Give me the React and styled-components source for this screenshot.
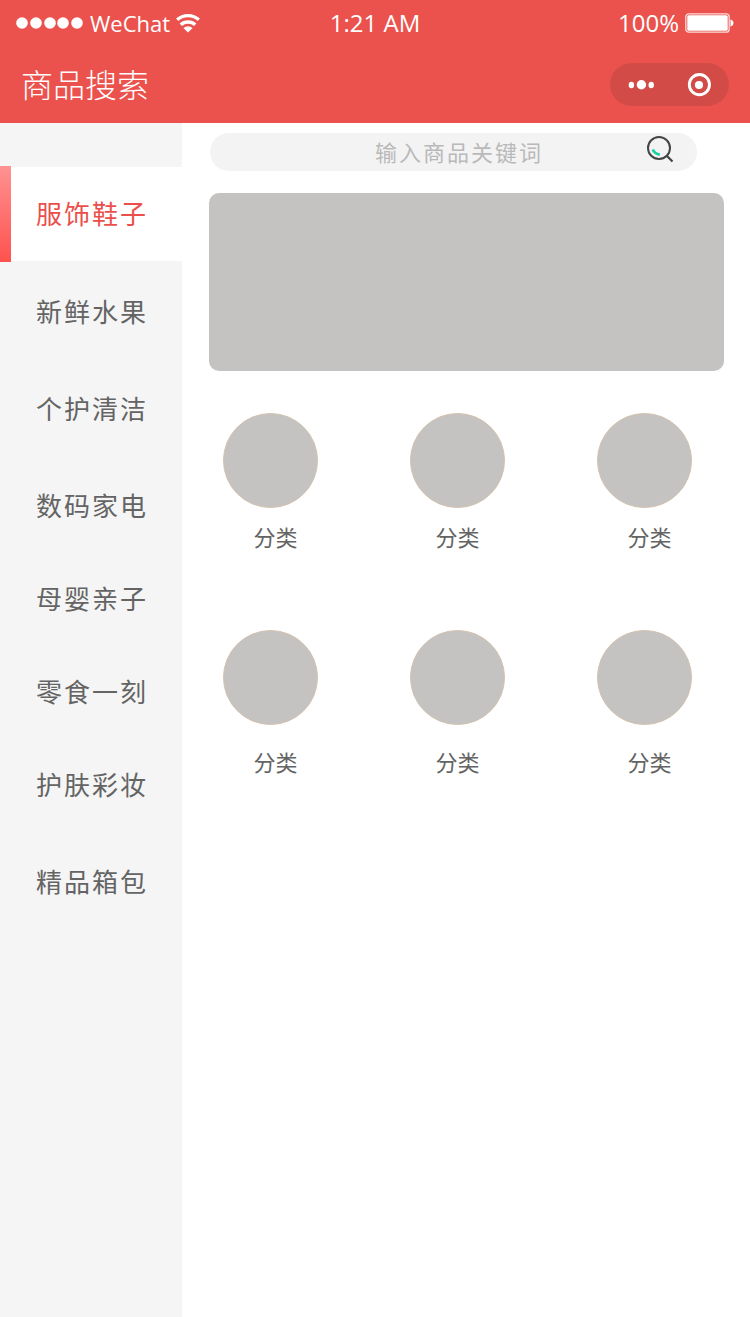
import React, { useState } from "react";
import styled, { createGlobalStyle } from "styled-components";

const GlobalStyle = createGlobalStyle`
  *, *::before, *::after { box-sizing: border-box; }
  body {
    margin: 0;
    background: #fff;
    color: #646464;
    font-family: "Noto Sans CJK SC", sans-serif;
  }
  button, input { font: inherit; color: inherit; border: 0; padding: 0; background: none; }
  button { cursor: pointer; }
  ul { list-style: none; margin: 0; padding: 0; }
`;

const Page = styled.div`
  display: flex;
  flex-direction: column;
  min-height: 100vh;
`;

const Header = styled.header`
  background: #eb524d;
  color: #fff;
`;

const StatusBar = styled.div`
  display: grid;
  grid-template-columns: 1fr auto 1fr;
  align-items: center;
  height: 46px;
  padding: 0 16px;
  font-family: "Open Sans", "Noto Sans", sans-serif;
  font-size: 24px;
  line-height: 32px;
`;

const StatusGroup = styled.div`
  display: flex;
  align-items: center;
  justify-content: ${({ $end }) => ($end ? "flex-end" : "flex-start")};
  gap: 6px;
`;

const Carrier = styled.span`
  font-size: 22px;
`;

const NavBar = styled.div`
  display: flex;
  align-items: center;
  justify-content: space-between;
  height: 77px;
  padding: 0 21px;
`;

const Title = styled.h1`
  margin: 0;
  padding-bottom: 4px;
  font-size: 32px;
  line-height: 48px;
  font-weight: 300;
`;

const Capsule = styled.div`
  display: flex;
  width: 119px;
  height: 43px;
  border-radius: 22px;
  background: #d34b47;
`;

const CapsuleButton = styled.button`
  flex: 1;
  display: flex;
  align-items: center;
  justify-content: center;
`;

const Body = styled.div`
  flex: 1;
  display: flex;
`;

const Sidebar = styled.nav`
  flex: none;
  width: 182px;
  padding-top: 44px;
  background: #f5f5f5;
`;

const SideItem = styled.li`
  margin-top: ${({ $spaced }) => ($spaced ? "4px" : "0")};
`;

const SideButton = styled.button`
  position: relative;
  display: block;
  width: 100%;
  height: ${({ $active }) => ($active ? "94px" : "93px")};
  padding: 0 0 2px 36px;
  text-align: left;
  font-size: 26px;
  line-height: 40px;
  letter-spacing: 2px;
  color: ${({ $active }) => ($active ? "#eb4f4b" : "#646464")};
  background: ${({ $active }) => ($active ? "#fff" : "transparent")};
`;

const ActiveBar = styled.span`
  position: absolute;
  left: 0;
  top: -1px;
  bottom: -1px;
  width: 11px;
  background: linear-gradient(#ff9292, #fd524e);
`;

const Main = styled.main`
  flex: 1;
  min-width: 0;
  padding: 10px 26px 0 27px;
`;

const SearchForm = styled.form`
  display: flex;
  align-items: center;
  height: 38px;
  margin: 0 27px 0 1px;
  padding: 0 23px 0 62px;
  border-radius: 19px;
  background: #f3f3f3;
`;

const SearchInput = styled.input`
  flex: 1;
  min-width: 0;
  height: 38px;
  padding-bottom: 2px;
  text-align: center;
  font-size: 22px;
  letter-spacing: 2px;
  outline: none;
  &::placeholder { color: #b9b9b9; opacity: 1; }
`;

const SearchButton = styled.button`
  display: flex;
  width: 28px;
  height: 38px;
`;

const Banner = styled.div`
  height: 178px;
  margin-top: 22px;
  border-radius: 10px;
  background: #c5c3c1;
`;

const Categories = styled.div`
  display: flex;
  flex-direction: column;
  gap: 78px;
  margin-top: 42px;
  padding: 0 32px 0 14px;
`;

const CategoryRow = styled.ul`
  display: flex;
  justify-content: space-between;
`;

const Category = styled.a`
  display: flex;
  flex-direction: column;
  gap: ${({ $roomy }) => ($roomy ? "20px" : "12px")};
  width: 95px;
  color: inherit;
  text-decoration: none;
`;

const Thumb = styled.span`
  height: 95px;
  border: 1px solid #d3c2ae;
  border-radius: 50%;
  background: #c5c3c1;
`;

const CategoryName = styled.span`
  padding-left: ${({ $indented }) => ($indented ? "10px" : "0")};
  text-align: center;
  font-size: 22px;
  line-height: 32px;
`;

const SignalDots = () => (
  <svg width="68" height="12" viewBox="0 0 68 12" fill="#fff" aria-hidden="true">
    {[6, 20, 34, 47, 61].map((x) => (
      <circle key={x} cx={x} cy="6" r="5.8" />
    ))}
  </svg>
);

const WifiIcon = () => (
  <svg width="24" height="20" viewBox="0 0 24 20" fill="none" stroke="#fff" strokeWidth="3.4" aria-hidden="true">
    <path d="M1.2 6.8C7 1.2 17 1.2 22.8 6.8" />
    <path d="M4.8 11.8C8.8 8 15.2 8 19.2 11.8" />
    <path d="M7.4 15Q12 11.4 16.6 15L12 19.6Z" fill="#fff" stroke="none" />
  </svg>
);

const BatteryIcon = () => (
  <svg width="49" height="20" viewBox="0 0 49 20" aria-hidden="true">
    <rect x=".8" y=".8" width="43.4" height="18.4" rx="3" fill="none" stroke="#fff" strokeOpacity=".8" strokeWidth="1.3" />
    <rect x="2.3" y="2.3" width="40.4" height="15.4" rx="1.5" fill="#fff" />
    <path d="M45.5 6.5C49.5 7.5 49.5 12.5 45.5 13.5Z" fill="#fff" />
  </svg>
);

const MoreIcon = () => (
  <svg width="28" height="10" viewBox="0 0 28 10" fill="#fff" aria-hidden="true">
    <ellipse cx="5.4" cy="5" rx="2.7" ry="3.2" />
    <circle cx="15.4" cy="4.8" r="4.7" />
    <ellipse cx="25.2" cy="5" rx="2.7" ry="3.2" />
  </svg>
);

const TargetIcon = () => (
  <svg width="24" height="24" viewBox="0 0 24 24" aria-hidden="true">
    <circle cx="12.4" cy="11.6" r="10.1" fill="none" stroke="#fff" strokeWidth="2.9" />
    <circle cx="12" cy="12" r="4.1" fill="#fff" />
  </svg>
);

const SearchIcon = () => (
  <svg width="28" height="32" viewBox="0 0 28 32" fill="none" aria-hidden="true">
    <circle cx="13" cy="15" r="11" stroke="#444" strokeWidth="2" />
    <path d="M20.5 22.5L26.5 28.5" stroke="#444" strokeWidth="2.2" />
    <path d="M6.8 16.5Q8.8 21 13.8 21.6" stroke="#14d2a0" strokeWidth="2.8" />
  </svg>
);

const SECTIONS = [
  { name: "服饰鞋子" },
  { name: "新鲜水果", spaced: true },
  { name: "个护清洁", spaced: true },
  { name: "数码家电", spaced: true },
  { name: "母婴亲子" },
  { name: "零食一刻" },
  { name: "护肤彩妆" },
  { name: "精品箱包", spaced: true },
];

const ROWS = [
  { id: "top", roomy: false, items: ["分类", "分类", "分类"] },
  { id: "bottom", roomy: true, items: ["分类", "分类", "分类"] },
];

export default function App() {
  const [active, setActive] = useState(0);

  return (
    <Page>
      <GlobalStyle />
      <Header>
        <StatusBar>
          <StatusGroup>
            <SignalDots />
            <Carrier>WeChat</Carrier>
            <WifiIcon />
          </StatusGroup>
          <span>1:21 AM</span>
          <StatusGroup $end>
            <span>100%</span>
            <BatteryIcon />
          </StatusGroup>
        </StatusBar>
        <NavBar>
          <Title>商品搜索</Title>
          <Capsule>
            <CapsuleButton type="button" aria-label="更多">
              <MoreIcon />
            </CapsuleButton>
            <CapsuleButton type="button" aria-label="关闭">
              <TargetIcon />
            </CapsuleButton>
          </Capsule>
        </NavBar>
      </Header>
      <Body>
        <Sidebar aria-label="商品分类">
          <ul>
            {SECTIONS.map(({ name, spaced }, i) => (
              <SideItem key={name} $spaced={spaced}>
                <SideButton type="button" $active={i === active} onClick={() => setActive(i)}>
                  {i === active && <ActiveBar />}
                  {name}
                </SideButton>
              </SideItem>
            ))}
          </ul>
        </Sidebar>
        <Main>
          <SearchForm role="search" onSubmit={(e) => e.preventDefault()}>
            <SearchInput type="text" aria-label="商品关键词" placeholder="输入商品关键词" />
            <SearchButton type="submit" aria-label="搜索">
              <SearchIcon />
            </SearchButton>
          </SearchForm>
          <Banner />
          <Categories>
            {ROWS.map(({ id, roomy, items }) => (
              <CategoryRow key={id}>
                {items.map((name, i) => (
                  <li key={i}>
                    <Category href="#category" $roomy={roomy}>
                      <Thumb />
                      <CategoryName $indented={i !== 1}>{name}</CategoryName>
                    </Category>
                  </li>
                ))}
              </CategoryRow>
            ))}
          </Categories>
        </Main>
      </Body>
    </Page>
  );
}
